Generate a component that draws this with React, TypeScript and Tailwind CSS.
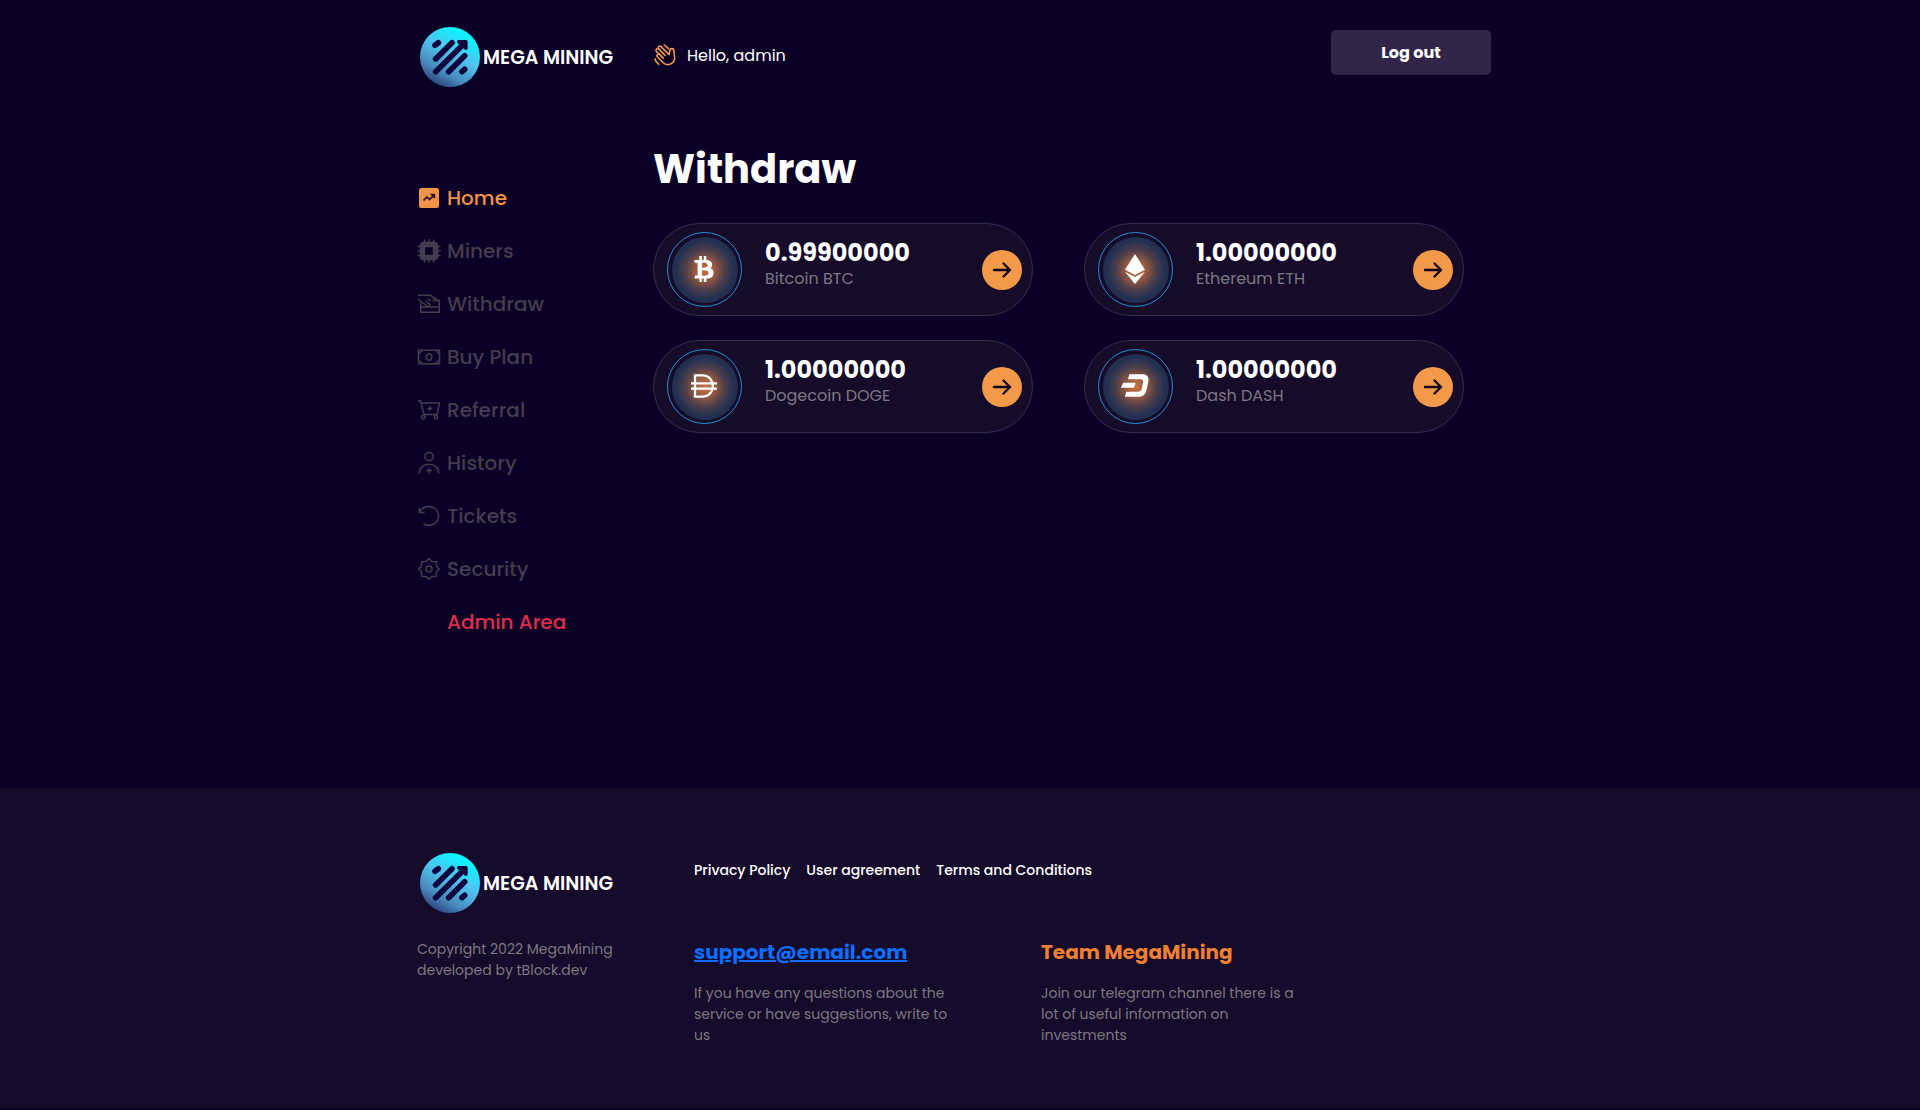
import type { ReactNode } from "react";
import { FaBtc } from "react-icons/fa";

function Logo() {
  return (
    <a href="#" className="flex items-center gap-[3px] pl-[3px]">
      <svg viewBox="0 0 180 180" className="size-[60px]" aria-hidden="true">
        <defs>
          <linearGradient id="logoFill" x1="0.8" y1="0.1" x2="0.3" y2="1">
            <stop offset="0.05" stopColor="#0cf4ff" />
            <stop offset="0.4" stopColor="#50c4f0" />
            <stop offset="0.75" stopColor="#478bbd" />
            <stop offset="1" stopColor="#2b3f7a" />
          </linearGradient>
        </defs>
        <circle cx="90" cy="90" r="90" fill="url(#logoFill)" />
        <g stroke="#10063f" strokeWidth="17" strokeLinecap="round" fill="none">
          <path d="M45 55 L55 47" />
          <path d="M47 96 L96 47" />
          <path d="M47 134 L128 54" />
          <path d="M86 134 L134 86" />
          <path d="M126 134 L134 127" />
        </g>
        <path
          d="M116 44 H138 V64 Z"
          fill="#10063f"
          stroke="#10063f"
          strokeWidth="10"
          strokeLinejoin="round"
        />
      </svg>
      <span className="pt-[2px] text-[19px] font-semibold text-white whitespace-nowrap">
        MEGA MINING
      </span>
    </a>
  );
}

function WaveIcon() {
  return (
    <svg
      viewBox="0 0 64 64"
      className="size-[22px]"
      fill="none"
      stroke="currentColor"
      strokeWidth="4.5"
      strokeLinecap="round"
      strokeLinejoin="round"
      aria-hidden="true"
    >
      <path d="M22 9 L44 31 L46 19 C48 11 58 12 58 20 L60 40 C59 59 38 66 26 54 L10 38 C6 32 12 27 17 31 L27 41" />
      <path d="M17 31 L7 22 C3 16 9 10 14 15 L32 33" />
      <path d="M14 15 C9 8 17 3 22 9" />
      <path d="M30 3 L43 14" />
      <path d="M3 43 C4 50 8 55 14 59" />
    </svg>
  );
}

function LineIcon({ children }: { children: ReactNode }) {
  return (
    <svg
      viewBox="0 0 24 24"
      className="size-6 shrink-0"
      fill="none"
      stroke="currentColor"
      strokeWidth="1.5"
      aria-hidden="true"
    >
      {children}
    </svg>
  );
}

const navItems = [
  {
    name: "Home",
    color: "text-[#f2934a]",
    icon: (
      <LineIcon>
        <rect x="2" y="2" width="20" height="20" rx="2.5" fill="currentColor" stroke="none" />
        <path
          d="M6.5 14.5 L10 11 L12.5 13.5 L17 8.8 M13.5 8.5 H17.3 V12.3"
          stroke="#2a1030"
          strokeWidth="1.7"
        />
      </LineIcon>
    ),
  },
  {
    name: "Miners",
    color: "text-[#443c4f]",
    icon: (
      <LineIcon>
        <rect x="5.5" y="5.5" width="13" height="13" rx="1" strokeWidth="5.5" strokeLinejoin="round" />
        <path d="M7.5 0.5 V4 M12 0.5 V4 M16.5 0.5 V4 M7.5 20 V23.5 M12 20 V23.5 M16.5 20 V23.5" />
        <path d="M0.5 7.5 H4 M0.5 12 H4 M0.5 16.5 H4 M20 7.5 H23.5 M20 12 H23.5 M20 16.5 H23.5" />
      </LineIcon>
    ),
  },
  {
    name: "Withdraw",
    color: "text-[#443c4f]",
    icon: (
      <LineIcon>
        <path d="M1 3.3 H13.5 L17 6 M15.5 8.5 H22.3 V20.3 H3.7 V10.5" />
        <path d="M1 7 L10 14 C13 15 14 12.5 11.5 11.3 L8.5 9 M11 7 L14 9 M16 5.5 L21 8.5 M4 15 H22" />
      </LineIcon>
    ),
  },
  {
    name: "Buy Plan",
    color: "text-[#443c4f]",
    icon: (
      <LineIcon>
        <rect x="1.5" y="5.2" width="21" height="13.6" />
        <ellipse cx="12" cy="12" rx="2.7" ry="3.3" />
        <path d="M1.5 9 L5.5 5.5 M22.5 9 L18.5 5.5 M1.5 15 L5.5 18.5 M22.5 15 L18.5 18.5" />
      </LineIcon>
    ),
  },
  {
    name: "Referral",
    color: "text-[#443c4f]",
    icon: (
      <LineIcon>
        <path d="M1 2.7 H3.5 L7 16.5 H20 L22.5 5 H4.2" />
        <path d="M12.8 8 V13 M10.3 10.5 H15.3" />
        <circle cx="6.3" cy="19.3" r="1.7" />
        <circle cx="19" cy="19.3" r="1.7" />
      </LineIcon>
    ),
  },
  {
    name: "History",
    color: "text-[#443c4f]",
    icon: (
      <LineIcon>
        <circle cx="12" cy="5.5" r="4.1" />
        <path d="M2.3 22.5 C2.3 10 21.7 10 21.7 22.5" />
        <path d="M12 16.8 V22.2 M9.3 19.5 H14.7" />
      </LineIcon>
    ),
  },
  {
    name: "Tickets",
    color: "text-[#443c4f]",
    icon: (
      <LineIcon>
        <path d="M2.6 8.2 C6 1.5 14.5 0.7 19 5.4 C23.4 10.2 21.8 17.3 17 20 C14 21.8 9.5 21.9 6.6 19.6" />
        <path d="M2.4 3.5 V8.5 H7.6" />
      </LineIcon>
    ),
  },
  {
    name: "Security",
    color: "text-[#443c4f]",
    icon: (
      <LineIcon>
        <path d="M12 1.8 L14.8 4.4 L19.2 4.6 L19.5 9.2 L22.2 12 L19.5 14.8 L19.2 19.4 L14.8 19.6 L12 22.2 L9.2 19.6 L4.8 19.4 L4.5 14.8 L1.8 12 L4.5 9.2 L4.8 4.6 L9.2 4.4 Z" />
        <circle cx="12" cy="12" r="3" />
      </LineIcon>
    ),
  },
  {
    name: "Admin Area",
    color: "text-[#e02d4b]",
    icon: <span className="size-6 shrink-0" />,
  },
];

const coins = [
  {
    name: "Bitcoin BTC",
    amount: "0.99900000",
    icon: <FaBtc size={26} />,
  },
  {
    name: "Ethereum ETH",
    amount: "1.00000000",
    icon: (
      <svg viewBox="0 0 60 90" className="h-[30px] w-5" fill="currentColor" aria-hidden="true">
        <path d="M30 0 L60 47 L30 63 L0 47 Z" />
        <path d="M0 53 L30 69 L60 53 L30 90 Z" />
      </svg>
    ),
  },
  {
    name: "Dogecoin DOGE",
    amount: "1.00000000",
    icon: (
      <svg viewBox="0 0 78 72" className="h-6 w-[26px]" fill="none" stroke="currentColor" strokeWidth="7" aria-hidden="true">
        <path d="M12 4 H34 C76 4 76 68 34 68 H12 Z" />
        <path d="M0 28 H78 M0 44 H78" />
      </svg>
    ),
  },
  {
    name: "Dash DASH",
    amount: "1.00000000",
    icon: (
      <svg viewBox="0 0 84 68" className="h-[23px] w-7" fill="currentColor" aria-hidden="true">
        <path d="M25 0 H64 C78 0 85 8 82 22 L77 46 C74 60 66 68 52 68 H12 L16 53 H50 C57 53 61 50 62 44 L66 25 C67 18 65 15 59 15 H21 Z" />
        <path d="M7 26 H44 L39 41 H0 C2 35 4 31 7 26 Z" />
      </svg>
    ),
  },
];

function CoinCard({ name, amount, icon }: { name: string; amount: string; icon: ReactNode }) {
  return (
    <div className="flex items-center rounded-full border border-[#372e49] bg-[#160c2a] py-2 pr-[10px] pl-[13px]">
      <div className="flex size-[75px] shrink-0 items-center justify-center rounded-full border border-[#2290d4]">
        <div className="flex size-[66px] items-center justify-center rounded-full bg-[radial-gradient(circle,#c87440_0%,#9c5c40_20%,#4f3f4a_42%,#243052_62%,#1d2c50_85%,#1a2145_100%)] pr-px pb-[2px] text-white">
          {icon}
        </div>
      </div>
      <div className="ml-[23px] grow pb-[9px]">
        <p className="text-2xl leading-7 font-bold text-white">{amount}</p>
        <p className="text-base text-[#7d7783]">{name}</p>
      </div>
      <button
        aria-label={`Withdraw ${name}`}
        className="flex size-10 shrink-0 items-center justify-center rounded-full bg-[#f2994a] text-[#12061f]"
      >
        <svg
          viewBox="0 0 20 20"
          className="size-5"
          fill="none"
          stroke="currentColor"
          strokeWidth="2.4"
          strokeLinecap="round"
          strokeLinejoin="round"
          aria-hidden="true"
        >
          <path d="M2 10 H18 M11.5 3.5 L18 10 L11.5 16.5" />
        </svg>
      </button>
    </div>
  );
}

export default function App() {
  return (
    <div className="min-h-screen bg-[#0b0026] font-['Poppins','Inter',sans-serif]">
      <header className="mx-auto flex max-w-[1140px] items-start pt-[27px] pr-[39px] pl-[27px]">
        <div className="w-[236px] shrink-0">
          <Logo />
        </div>
        <div className="flex h-14 grow items-center gap-[11px] pl-px text-white">
          <span className="text-[#f2994a]">
            <WaveIcon />
          </span>
          <p className="pt-[2px]">Hello, admin</p>
        </div>
        <div className="flex h-[50px] items-center">
          <button className="h-[45px] w-40 rounded-[5px] bg-[#312647] pt-[2px] text-base font-bold text-white">
            Log out
          </button>
        </div>
      </header>

      <main className="mx-auto flex max-w-[1140px] pr-[39px] pb-[139px] pl-[27px]">
        <nav className="w-[236px] shrink-0 pt-[84px] pb-px">
          <ul>
            {navItems.map((item) => (
              <li key={item.name}>
                <a href="#" className={`flex h-[53px] items-center gap-[6px] text-xl font-medium ${item.color}`}>
                  {item.icon}
                  {item.name}
                </a>
              </li>
            ))}
          </ul>
        </nav>
        <section className="grow pt-[58px] pr-[27px]">
          <h1 className="mb-[30px] text-[40px] leading-[48px] font-bold text-white">
            Withdraw
          </h1>
          <div className="grid grid-cols-2 gap-x-[51px] gap-y-6">
            {coins.map((coin) => (
              <CoinCard key={coin.name} {...coin} />
            ))}
          </div>
        </section>
      </main>

      <footer className="bg-[#150b2a] pt-[65px] pb-[62px]">
        <div className="mx-auto flex max-w-[1140px] pr-[39px] pl-[27px]">
          <div className="w-[277px] shrink-0">
            <Logo />
            <p className="mt-[26px] text-sm leading-[21px] text-[#7d7783]">
              Copyright 2022 MegaMining
              <br />
              developed by tBlock.dev
            </p>
          </div>
          <div className="grow pt-[7px]">
            <div className="flex gap-4 text-sm leading-[21px] font-medium text-white">
              <a href="#">Privacy Policy</a>
              <a href="#">User agreement</a>
              <a href="#">Terms and Conditions</a>
            </div>
            <div className="mt-[59px] flex">
              <div className="w-[347px]">
                <a href="mailto:support@email.com" className="text-xl leading-6 font-bold text-[#0d6efd] underline">
                  support@email.com
                </a>
                <p className="mt-[17px] max-w-[262px] text-sm leading-[21px] text-[#7d7783]">
                  If you have any questions about the service or have
                  suggestions, write to us
                </p>
              </div>
              <div className="w-[347px]">
                <a href="#" className="text-xl leading-6 font-bold text-[#f07f34]">
                  Team MegaMining
                </a>
                <p className="mt-[17px] max-w-[262px] text-sm leading-[21px] text-[#7d7783]">
                  Join our telegram channel there is a lot of useful
                  information on investments
                </p>
              </div>
            </div>
          </div>
        </div>
      </footer>
    </div>
  );
}
